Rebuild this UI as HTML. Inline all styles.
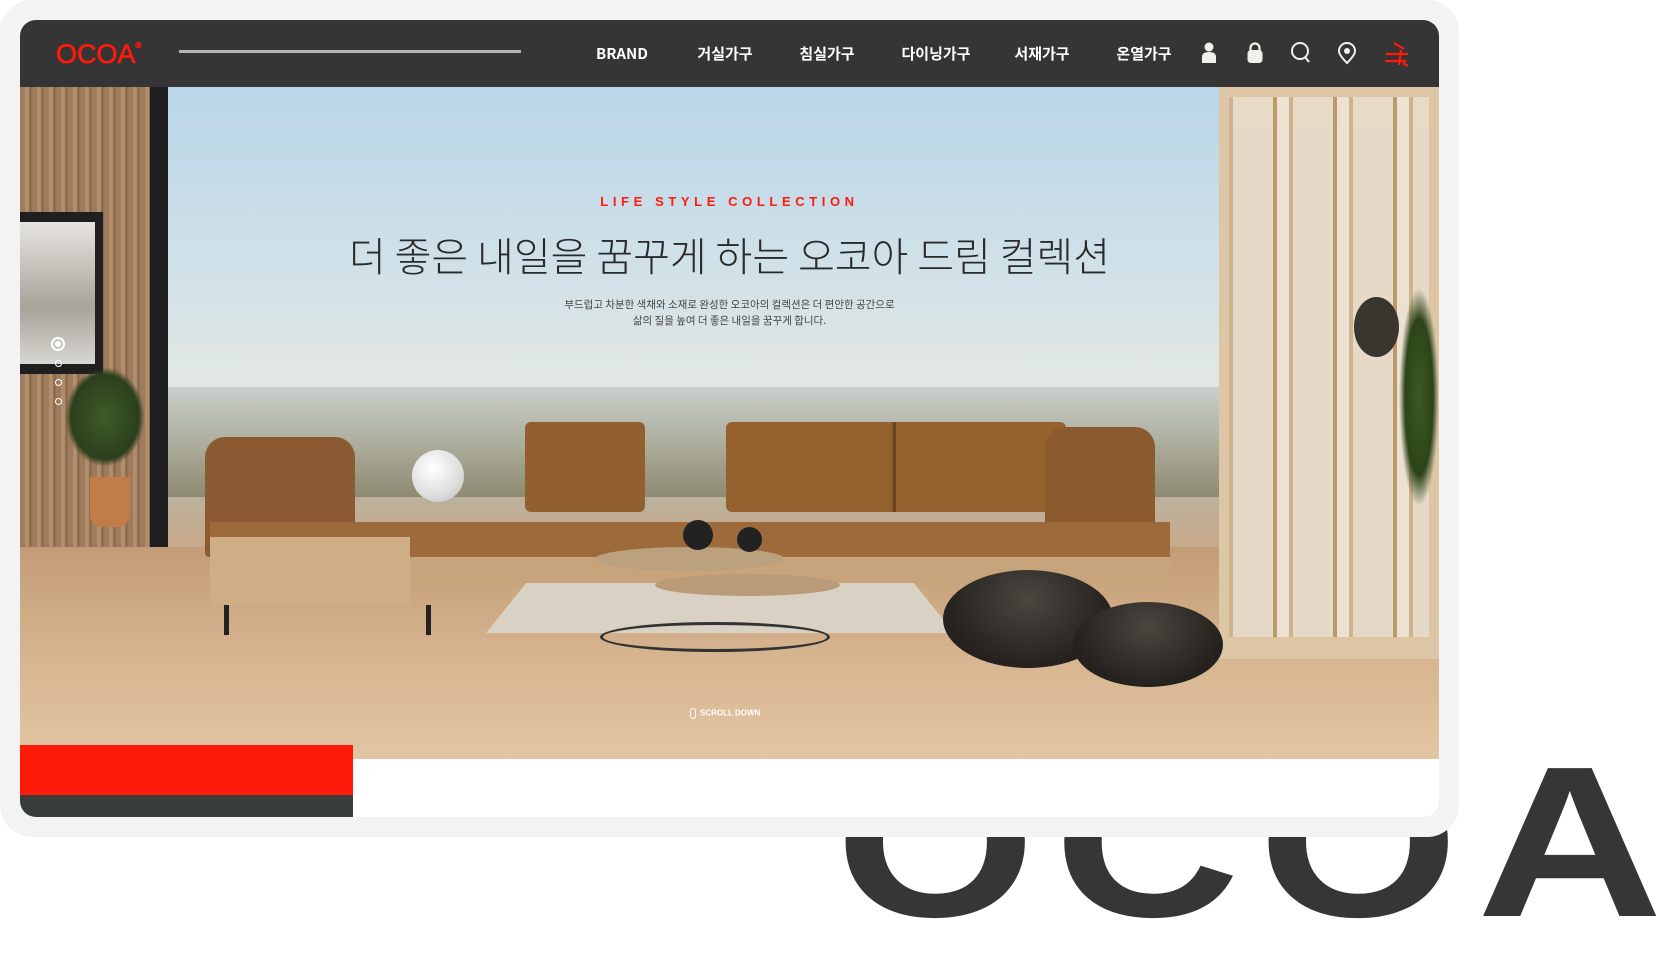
<!DOCTYPE html>
<html><head><meta charset="utf-8">
<style>
*{margin:0;padding:0;box-sizing:border-box}
body{width:1663px;height:926px;background:#fff;position:relative;overflow:hidden;font-family:"Liberation Sans","Noto Sans CJK KR",sans-serif}
.big{position:absolute;right:-18px;top:734px;font-family:"Liberation Sans",sans-serif;font-weight:700;font-size:215px;color:#363636;letter-spacing:15px;line-height:215px;transform:scaleX(1.2);transform-origin:right}
.frame{position:absolute;left:0;top:0;width:1459px;height:837px;background:#f3f3f3;border-radius:32px}
.inner{position:absolute;left:20px;top:20px;width:1419px;height:797px;background:#fff;border-radius:16px;overflow:hidden}
.nav{position:absolute;left:0;top:0;width:1419px;height:67px;background:#353535}
.logo{position:absolute;left:36px;top:19px;color:#ff1a0a;font-size:27px;font-weight:400;letter-spacing:0px;-webkit-text-stroke:0.6px #ff1a0a}
.logo sup{font-size:8px;vertical-align:top;position:relative;top:2px}
.line{position:absolute;left:159px;top:30px;width:342px;height:3px;background:#b5b5b5}
.menu{position:absolute;top:22px;line-height:24px;color:#fff;font-weight:700;font-size:15px;transform:translateX(-50%);white-space:nowrap;font-family:"Noto Sans CJK KR",sans-serif}
.ic{position:absolute;top:21px}
.hero{position:absolute;left:0;top:67px;width:1419px;height:672px;overflow:hidden;background:linear-gradient(#b9d6e8 0%,#d3e2e8 30%,#e4e8e2 45%,#c9cabd 52%,#b8b29f 60%,#c7a98a 68%,#d8b894 80%,#e2c7a6 100%)}
.red{position:absolute;left:0;top:725px;width:333px;height:50px;background:#ff1a0a}
.dk{position:absolute;left:0;top:775px;width:333px;height:22px;background:#3a3e3a}
</style></head><body>
<div class="big">OCOA</div>
<div class="frame">
<div class="inner">
<div class="hero">
  <div style="position:absolute;left:0;top:0;width:140px;height:470px;background:repeating-linear-gradient(90deg,#9d7b5c 0 5px,#b08d6c 5px 9px,#8f6e50 9px 12px)"></div>
  <div style="position:absolute;left:130px;top:0;width:18px;height:460px;background:#1e1e1e"></div>
  <div style="position:absolute;left:0;top:125px;width:83px;height:162px;background:#1f1f1f"></div>
  <div style="position:absolute;left:0;top:135px;width:75px;height:142px;background:linear-gradient(#e6e4e0,#a7a39b 60%,#d8d6d2)"></div>
  <div style="position:absolute;left:45px;top:280px;width:80px;height:100px;background:radial-gradient(ellipse at center,#3f5b2a 0,#2b3f1c 60%,transparent 70%)"></div>
  <div style="position:absolute;left:70px;top:390px;width:40px;height:50px;background:#c07d4a;border-radius:0 0 12px 12px"></div>
  <div style="position:absolute;left:148px;top:300px;width:1070px;height:110px;background:linear-gradient(#c9d0cc,#a7a794 60%,#8e8a72)"></div>
  <div style="position:absolute;left:0;top:460px;width:1419px;height:212px;background:linear-gradient(#c29c76,#d6b48f 50%,#e2c6a3)"></div>
  <div style="position:absolute;right:0;top:0;width:220px;height:572px;background:#dcc6a6"></div>
  <div style="position:absolute;right:10px;top:10px;width:200px;height:540px;background:repeating-linear-gradient(90deg,#cdb18a 0 4px,#e8dccb 4px 44px,#b89566 44px 48px,#efe5d7 48px 60px),#e4d5bf;opacity:.9"></div>
  <div style="position:absolute;right:40px;top:210px;width:45px;height:60px;background:#3a352e;border-radius:50%"></div>
  <div style="position:absolute;right:0;top:200px;width:40px;height:220px;background:radial-gradient(ellipse,#3c5a22 0,#2c4418 50%,transparent 70%)"></div>
  <div style="position:absolute;left:466px;top:476px;width:468px;height:70px;background:#d9d1c4;clip-path:polygon(12% 0,88% 0,100% 100%,0 100%)"></div>
  <div style="position:absolute;left:185px;top:350px;width:150px;height:120px;background:#8b5a32;border-radius:20px 20px 4px 4px"></div>
  <div style="position:absolute;left:505px;top:335px;width:120px;height:90px;background:#92602f;border-radius:6px"></div>
  <div style="position:absolute;left:706px;top:335px;width:340px;height:90px;background:linear-gradient(90deg,#94612f 0 49%,#6e4522 49% 50%,#94612f 50%);border-radius:6px"></div>
  <div style="position:absolute;left:1025px;top:340px;width:110px;height:110px;background:#8c5a2f;border-radius:20px 20px 6px 6px"></div>
  <div style="position:absolute;left:190px;top:435px;width:960px;height:40px;background:#9c6a3b"></div>
  <div style="position:absolute;left:190px;top:470px;width:960px;height:26px;background:#c8a47c"></div>
  <div style="position:absolute;left:190px;top:450px;width:200px;height:68px;background:#cfae86"></div>
  <div style="position:absolute;left:204px;top:518px;width:5px;height:30px;background:#222"></div>
  <div style="position:absolute;left:406px;top:518px;width:5px;height:30px;background:#222"></div>
  <div style="position:absolute;left:575px;top:460px;width:190px;height:24px;background:#bca17f;border-radius:50%"></div>
  <div style="position:absolute;left:635px;top:487px;width:185px;height:22px;background:#b99b78;border-radius:50%"></div>
  <div style="position:absolute;left:580px;top:535px;width:230px;height:30px;border:3px solid #333;border-radius:50%"></div>
  <div style="position:absolute;left:663px;top:433px;width:30px;height:30px;background:#222;border-radius:50%"></div>
  <div style="position:absolute;left:717px;top:440px;width:25px;height:25px;background:#222;border-radius:50%"></div>
  <div style="position:absolute;left:392px;top:363px;width:52px;height:52px;background:radial-gradient(circle at 40% 35%,#fff,#ddd 60%,#bbb);border-radius:50%"></div>
  <div style="position:absolute;left:923px;top:483px;width:170px;height:98px;background:radial-gradient(ellipse at 50% 30%,#4a4640,#24211e 70%);border-radius:50%"></div>
  <div style="position:absolute;left:1053px;top:515px;width:150px;height:85px;background:radial-gradient(ellipse at 50% 30%,#4a4640,#24211e 70%);border-radius:50%"></div>
  <div style="position:absolute;left:31px;top:250px;width:14px;height:14px;border:2px solid #fff;border-radius:50%"><div style="width:6px;height:6px;background:#fff;border-radius:50%;margin:2px"></div></div>
  <div style="position:absolute;left:35px;top:273px;width:7px;height:7px;border:1.5px solid #fff;border-radius:50%"></div>
  <div style="position:absolute;left:35px;top:292px;width:7px;height:7px;border:1.5px solid #fff;border-radius:50%"></div>
  <div style="position:absolute;left:35px;top:311px;width:7px;height:7px;border:1.5px solid #fff;border-radius:50%"></div>
  <div style="position:absolute;left:0;width:1419px;top:107px;text-align:center;color:#ff1a0a;font-weight:700;font-size:13px;letter-spacing:4.6px">LIFE STYLE COLLECTION</div>
  <div style="position:absolute;left:0;width:1419px;top:138px;text-align:center;color:#2a2a2a;font-weight:300;font-size:40px;font-family:'Noto Sans CJK KR',sans-serif">더 좋은 내일을 꿈꾸게 하는 오코아 드림 컬렉션</div>
  <div style="position:absolute;left:0;width:1419px;top:210px;text-align:center;color:#444;font-size:10.5px;line-height:16px;font-family:'Noto Sans CJK KR',sans-serif">부드럽고 차분한 색채와 소재로 완성한 오코아의 컬렉션은 더 편안한 공간으로<br>삶의 질을 높여 더 좋은 내일을 꿈꾸게 합니다.</div>
  <div style="position:absolute;left:670px;top:621px;color:#fff;font-size:8px;font-weight:700"><span style="display:inline-block;width:6px;height:11px;border:1.3px solid #fff;border-radius:3px;vertical-align:middle;margin-right:4px"></span>SCROLL DOWN</div>
</div>
<div class="red"></div><div class="dk"></div>
<div class="nav">
  <div class="logo">OCOA<sup>®</sup></div>
  <div class="line"></div>
  <div class="menu" style="left:602px">BRAND</div>
  <div class="menu" style="left:705px">거실가구</div>
  <div class="menu" style="left:807px">침실가구</div>
  <div class="menu" style="left:916px">다이닝가구</div>
  <div class="menu" style="left:1022px">서재가구</div>
  <div class="menu" style="left:1124px">온열가구</div>
  <svg class="ic" style="left:1179px" width="20" height="24" viewBox="0 0 20 24"><circle cx="10" cy="6" r="4.5" fill="#f2f0ea"/><path d="M3 22 V16 Q3 11 10 11 Q17 11 17 16 V22Z" fill="#f2f0ea"/></svg>
  <svg class="ic" style="left:1225px" width="20" height="24" viewBox="0 0 20 24"><path d="M5.5 10 V7 a4.5 4.5 0 0 1 9 0 V10" fill="none" stroke="#f2f0ea" stroke-width="2.2"/><rect x="2.5" y="9" width="15" height="13" rx="3.5" fill="#f2f0ea"/></svg>
  <svg class="ic" style="left:1270px" width="22" height="24" viewBox="0 0 22 24"><circle cx="10" cy="10" r="8" fill="none" stroke="#f2f0ea" stroke-width="2"/><path d="M15 16 L19 21" stroke="#f2f0ea" stroke-width="2.2"/></svg>
  <svg class="ic" style="left:1316px" width="22" height="24" viewBox="0 0 22 24"><path d="M11 22 Q3 14 3 10 a8 8 0 0 1 16 0 Q19 14 11 22Z" fill="none" stroke="#f2f0ea" stroke-width="2"/><circle cx="11" cy="10" r="3" fill="#f2f0ea"/></svg>
  <svg class="ic" style="left:1364px" width="26" height="28" viewBox="0 0 26 28"><path d="M10 2 L20 8 M2 13 H24 M1 20 H22 M17 9 L15 24 M19 22 L24 25" stroke="#ff1a0a" stroke-width="2.2" fill="none"/></svg>
</div>
</div>
</div>
</body></html>
